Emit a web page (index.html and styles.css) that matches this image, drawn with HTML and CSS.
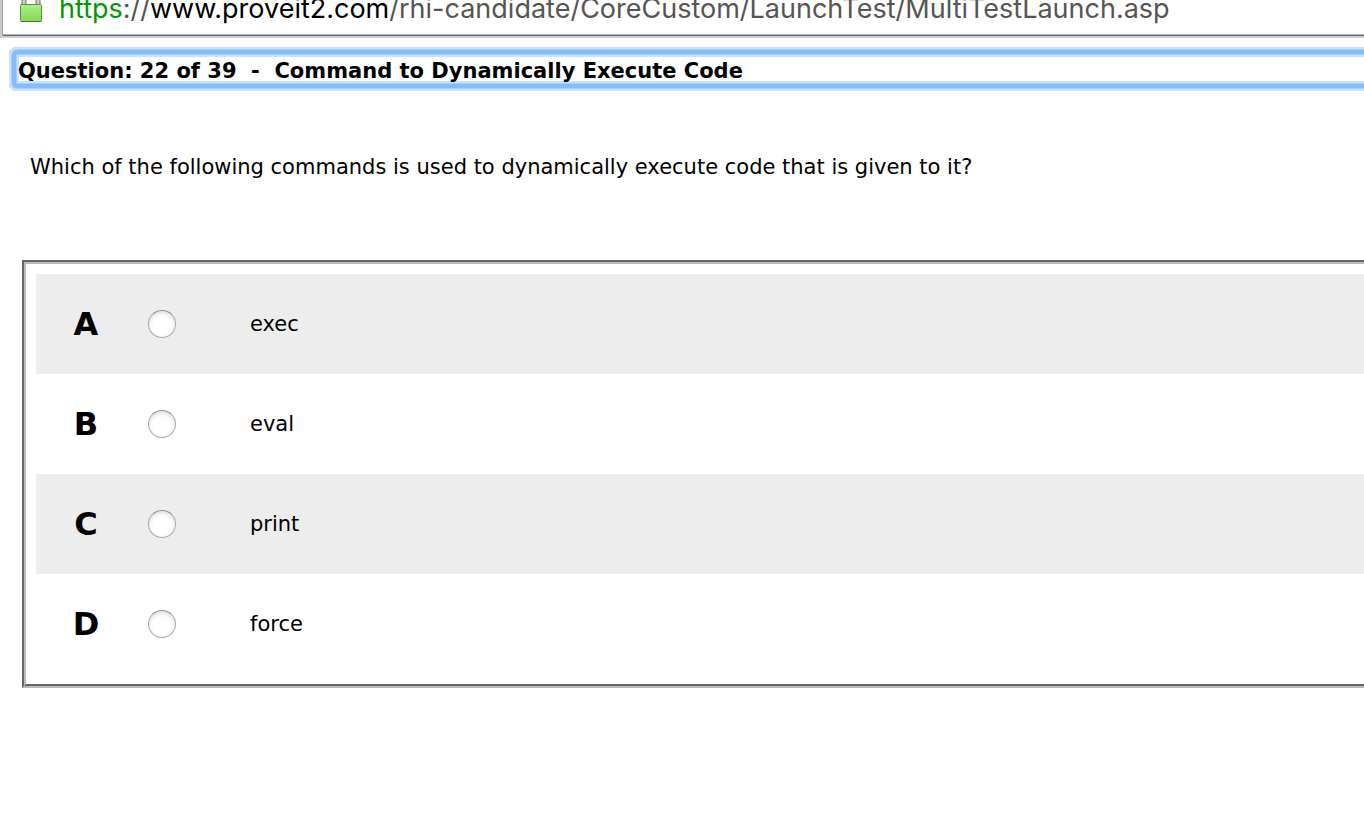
FILE: index.html
```html
<!DOCTYPE html>
<html lang="en">
<head>
<meta charset="utf-8">
<title>Question 22 of 39</title>
<link rel="stylesheet" href="styles.css">
</head>
<body>
<header class="address-bar">
  <svg class="lock" width="24" height="36" viewBox="0 0 24 36" aria-hidden="true">
    <defs><linearGradient id="lock-fill" x1="0" y1="0" x2="0" y2="1"><stop offset="0" stop-color="#aeee83"/><stop offset="1" stop-color="#86d858"/></linearGradient></defs>
    <path d="M5 19V9a7 7 0 0 1 14 0v10" fill="none" stroke="#747474" stroke-width="5"/>
    <path d="M5 19V9a7 7 0 0 1 14 0v10" fill="none" stroke="#c9c9c9" stroke-width="3"/>
    <rect x="1.5" y="18.5" width="21" height="17" rx="1" fill="url(#lock-fill)" stroke="#4f9a38"/>
    <path d="M2 35.5h20" stroke="#3e7a2b"/>
  </svg>
  <div class="url"><span class="scheme">https</span>://<span class="host">www.proveit2.com</span>/rhi-candidate/CoreCustom/LaunchTest/MultiTestLaunch.asp</div>
</header>
<main class="page">
  <h1 class="question-title" tabindex="0">Question: 22 of 39&nbsp; -&nbsp; Command to Dynamically Execute Code</h1>
  <p class="question-text" id="question">Which of the following commands is used to dynamically execute code that is given to it?</p>
  <div class="options" role="radiogroup" aria-labelledby="question">
    <label class="option"><span class="letter">A</span><input class="radio" type="radio" name="answer"><span>exec</span></label>
    <label class="option"><span class="letter">B</span><input class="radio" type="radio" name="answer"><span>eval</span></label>
    <label class="option"><span class="letter">C</span><input class="radio" type="radio" name="answer"><span>print</span></label>
    <label class="option"><span class="letter">D</span><input class="radio" type="radio" name="answer"><span>force</span></label>
  </div>
</main>
</body>
</html>
```

FILE: styles.css
```css
* {
  box-sizing: border-box;
}

body {
  margin: 0;
  background: #fff;
  color: #000;
  font-family: Verdana, "DejaVu Sans", sans-serif;
  font-size: 21px;
  line-height: 28px;
  overflow-x: hidden;
}

/* Address bar, scrolled partly out of view */
.address-bar {
  display: flex;
  align-items: flex-end;
  gap: 16px;
  height: 38px;
  padding: 0 0 12px 17px;
  overflow: hidden;
  border-left: 2px solid #c8c8c8;
  border-bottom: 2px solid #cdcdcd;
  box-shadow: inset 1px 0 #a0a4aa, inset 0 -1px #63676e, inset 0 -2px #a9b1bc;
}

.lock {
  flex: none;
  margin-bottom: 2px;
}

.url {
  color: #555;
  font-family: Inter, sans-serif;
  font-size: 27px;
  line-height: 30px;
  white-space: nowrap;
}

.scheme {
  color: #090;
}

.host {
  color: #000;
}

.page {
  padding: 9px 0 40px;
  overflow: hidden;
}

.question-title {
  margin: 0 -12px 0 9px;
  padding: 11px 9px 7px;
  border-radius: 8px;
  font-size: 21px;
  line-height: 26px;
  box-shadow:
    inset 0 0 0 2px #cbe2fd,
    inset 0 0 0 3px #a5cffb,
    inset 0 0 0 7px #82bdff,
    inset 0 0 0 8px #a5cffb,
    inset 0 0 0 10px #cbe2fd;
}

.question-text {
  margin: 62px 30px 79px;
}

.options {
  margin-left: 22px;
  padding: 10px 0 10px 10px;
  border: 4px groove #bbb;
  border-right: 0;
}

.option {
  display: grid;
  grid-template-columns: 100px 52px 1fr;
  align-items: center;
  min-height: 100px;
}

.option > :last-child {
  padding-left: 62px;
  line-height: 30px;
}

.option:nth-child(odd) {
  background: #ededed;
}

.letter {
  text-align: center;
  font-size: 32px;
  font-weight: bold;
  line-height: 40px;
}

.radio {
  appearance: none;
  width: 28px;
  height: 28px;
  margin: 0;
  justify-self: center;
  border: 1px solid #aaa;
  border-top-color: #929292;
  border-radius: 50%;
  background: #fff;
  box-shadow: inset 0 2px 4px #ddd;
}

.radio:checked {
  background: radial-gradient(#333 0 6px, #fff 7px);
}
```
